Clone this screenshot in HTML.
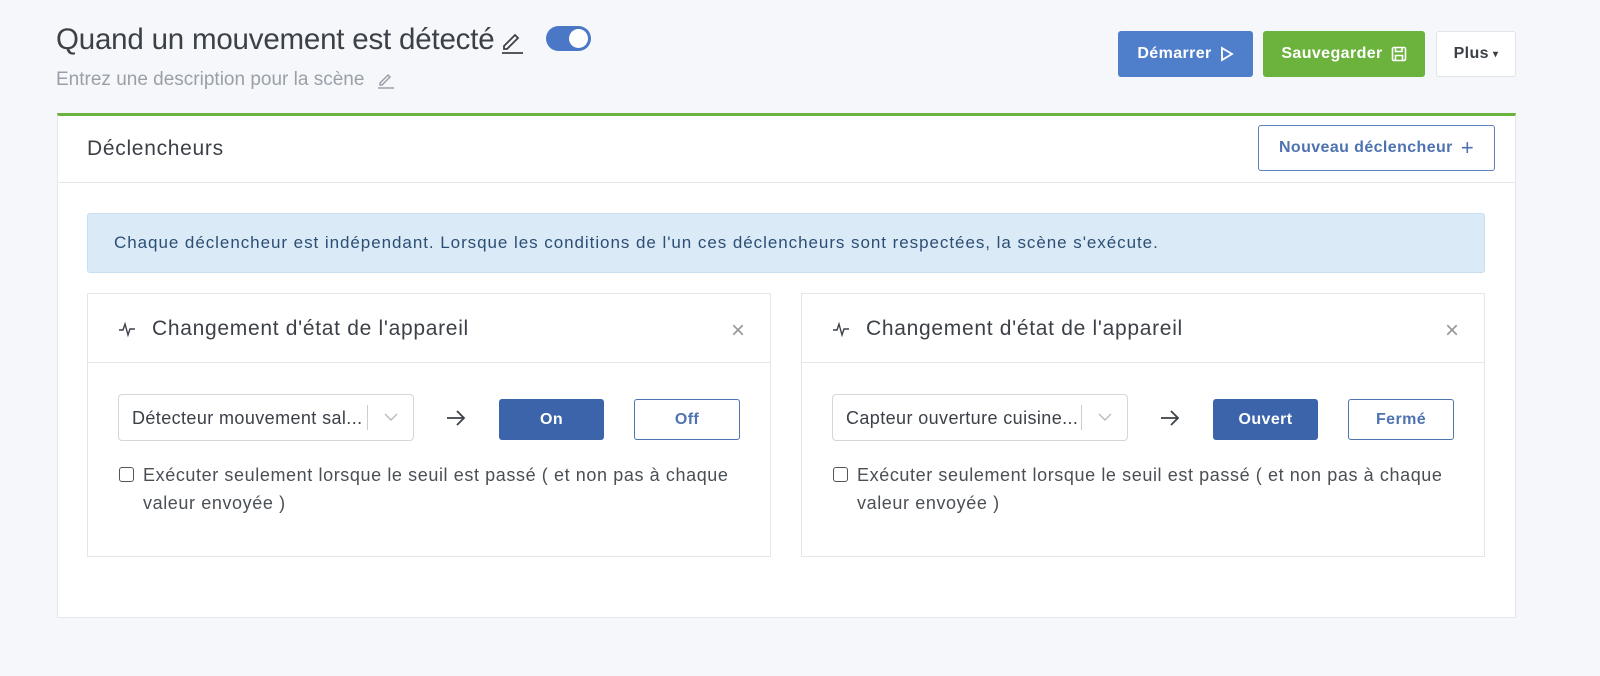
<!DOCTYPE html>
<html><head><meta charset="utf-8"><style>
*{box-sizing:border-box;margin:0;padding:0}
body{width:1600px;height:676px;background:#f5f7fb;font-family:"Liberation Sans",sans-serif;position:relative;overflow:hidden;color:#495057}
.a{position:absolute}
.btn{position:absolute;border-radius:3px;font-weight:bold;font-size:16px;display:flex;align-items:center;justify-content:center;gap:8px;letter-spacing:0.4px}
.card{position:absolute;background:#fff;border:1px solid #e3e6ea}
.ct{font-size:21px;color:#3c4148;letter-spacing:0.7px}
.sel{font-size:18px;color:#3c4148;letter-spacing:0.4px}
.chk{font-size:18px;color:#4a4f55;line-height:28px;width:590px;letter-spacing:0.6px}
</style></head><body>
<div class="a" style="left:56px;top:23px;font-size:29.5px;color:#3c4148;letter-spacing:-0.2px">Quand un mouvement est détecté</div>
<svg class="a" style="left:499px;top:28px" width="26" height="26" viewBox="0 0 26 26" fill="none" stroke="#3c4148" stroke-width="1.8"><path d="M5 18 L16 7 L19 10 L8 21 L5 21 Z"/><path d="M3 25 H24"/></svg>
<div class="a" style="left:546px;top:26px;width:45px;height:25px;border-radius:13px;background:#4a78c6"></div>
<div class="a" style="left:569px;top:29px;width:19px;height:19px;border-radius:50%;background:#fff"></div>
<div class="a" style="left:56px;top:69px;font-size:19px;color:#9aa0a8">Entrez une description pour la scène</div>
<svg class="a" style="left:376px;top:70px" width="20" height="20" viewBox="0 0 20 20" fill="none" stroke="#9aa0a8" stroke-width="1.5"><path d="M4 13 L12 5 L14 7 L6 15 L4 15 Z"/><path d="M2 18 H18"/></svg>

<div class="btn" style="left:1118px;top:31px;width:135px;height:46px;background:#4f7fcb;color:#fff">Démarrer <svg width="14" height="16" viewBox="0 0 14 16" fill="none" stroke="#fff" stroke-width="1.8"><path d="M2 2 L12 8 L2 14 Z"/></svg></div>
<div class="btn" style="left:1263px;top:31px;width:162px;height:46px;background:#6cb33e;color:#fff">Sauvegarder <svg width="16" height="16" viewBox="0 0 16 16" fill="none" stroke="#fff" stroke-width="1.6"><rect x="1.5" y="1.5" width="13" height="13" rx="1.5"/><path d="M4.5 1.5 V5.5 H11 V1.5 M4.5 14.5 V9.5 H11.5 V14.5"/></svg></div>
<div class="btn" style="left:1436px;top:31px;width:80px;height:46px;background:#fff;border:1px solid #e1e4e8;color:#3c4148;gap:4px">Plus <span style="font-size:10px">▾</span></div>

<div class="card" style="left:57px;top:113px;width:1459px;height:505px;border-top:3px solid #6cb33e"></div>
<div class="a" style="left:57px;top:182px;width:1459px;height:1px;background:#e3e6ea"></div>
<div class="a" style="left:87px;top:137px;font-size:21px;color:#3c4148;letter-spacing:0.7px">Déclencheurs</div>
<div class="btn" style="left:1258px;top:125px;width:237px;height:46px;border:1.5px solid #5b7fb8;color:#4f73b0;background:#fff">Nouveau déclencheur <span style="font-size:22px;font-weight:normal">+</span></div>

<div class="a" style="left:87px;top:213px;width:1398px;height:60px;background:#dbeaf7;border:1px solid #c9def0;border-radius:3px;font-size:17px;color:#2b4f74;padding:19px 0 0 26px;letter-spacing:0.95px;white-space:nowrap">Chaque déclencheur est indépendant. Lorsque les conditions de l'un ces déclencheurs sont respectées, la scène s'exécute.</div>

<div class="card" style="left:87px;top:293px;width:684px;height:264px"></div>
<div class="a" style="left:88px;top:362px;width:682px;height:1px;background:#e3e6ea"></div>
<svg class="a" style="left:118px;top:320px" width="18" height="18" viewBox="0 0 18 18" fill="none" stroke="#3c4148" stroke-width="1.4"><path d="M1 10 H5 L7 4 L10 15 L12 9 H17"/></svg>
<div class="a ct" style="left:152px;top:317px">Changement d'état de l'appareil</div>
<div class="a" style="left:731px;top:317px;font-size:24px;color:#999;font-weight:300">×</div>
<div class="a sel" style="left:118px;top:394px;width:296px;height:47px;border:1px solid #d3d6da;border-radius:4px;padding:13px 0 0 13px">Détecteur mouvement sal...</div>
<div class="a" style="left:367px;top:405px;width:1px;height:25px;background:#ccc"></div>
<svg class="a" style="left:383px;top:412px" width="16" height="10" viewBox="0 0 16 10" fill="none" stroke="#bbb" stroke-width="1.4"><path d="M2 2 L8 8 L14 2"/></svg>
<svg class="a" style="left:446px;top:409px" width="20" height="18" viewBox="0 0 20 18" fill="none" stroke="#3c4148" stroke-width="1.8"><path d="M1 9 H18 M11 2 L18 9 L11 16"/></svg>
<div class="btn" style="left:499px;top:399px;width:105px;height:41px;background:#3c64aa;color:#fff">On</div>
<div class="btn" style="left:634px;top:399px;width:106px;height:41px;border:1.5px solid #4f73b0;color:#4f73b0;background:#fff">Off</div>
<div class="a" style="left:119px;top:467px;width:15px;height:15px;border:1.3px solid #555;border-radius:3px"></div>
<div class="a chk" style="left:143px;top:461px">Exécuter seulement lorsque le seuil est passé ( et non pas à chaque valeur envoyée )</div>

<div class="card" style="left:801px;top:293px;width:684px;height:264px"></div>
<div class="a" style="left:802px;top:362px;width:682px;height:1px;background:#e3e6ea"></div>
<svg class="a" style="left:832px;top:320px" width="18" height="18" viewBox="0 0 18 18" fill="none" stroke="#3c4148" stroke-width="1.4"><path d="M1 10 H5 L7 4 L10 15 L12 9 H17"/></svg>
<div class="a ct" style="left:866px;top:317px">Changement d'état de l'appareil</div>
<div class="a" style="left:1445px;top:317px;font-size:24px;color:#999;font-weight:300">×</div>
<div class="a sel" style="left:832px;top:394px;width:296px;height:47px;border:1px solid #d3d6da;border-radius:4px;padding:13px 0 0 13px">Capteur ouverture cuisine...</div>
<div class="a" style="left:1081px;top:405px;width:1px;height:25px;background:#ccc"></div>
<svg class="a" style="left:1097px;top:412px" width="16" height="10" viewBox="0 0 16 10" fill="none" stroke="#bbb" stroke-width="1.4"><path d="M2 2 L8 8 L14 2"/></svg>
<svg class="a" style="left:1160px;top:409px" width="20" height="18" viewBox="0 0 20 18" fill="none" stroke="#3c4148" stroke-width="1.8"><path d="M1 9 H18 M11 2 L18 9 L11 16"/></svg>
<div class="btn" style="left:1213px;top:399px;width:105px;height:41px;background:#3c64aa;color:#fff">Ouvert</div>
<div class="btn" style="left:1348px;top:399px;width:106px;height:41px;border:1.5px solid #4f73b0;color:#4f73b0;background:#fff">Fermé</div>
<div class="a" style="left:833px;top:467px;width:15px;height:15px;border:1.3px solid #555;border-radius:3px"></div>
<div class="a chk" style="left:857px;top:461px">Exécuter seulement lorsque le seuil est passé ( et non pas à chaque valeur envoyée )</div>
</body></html>
